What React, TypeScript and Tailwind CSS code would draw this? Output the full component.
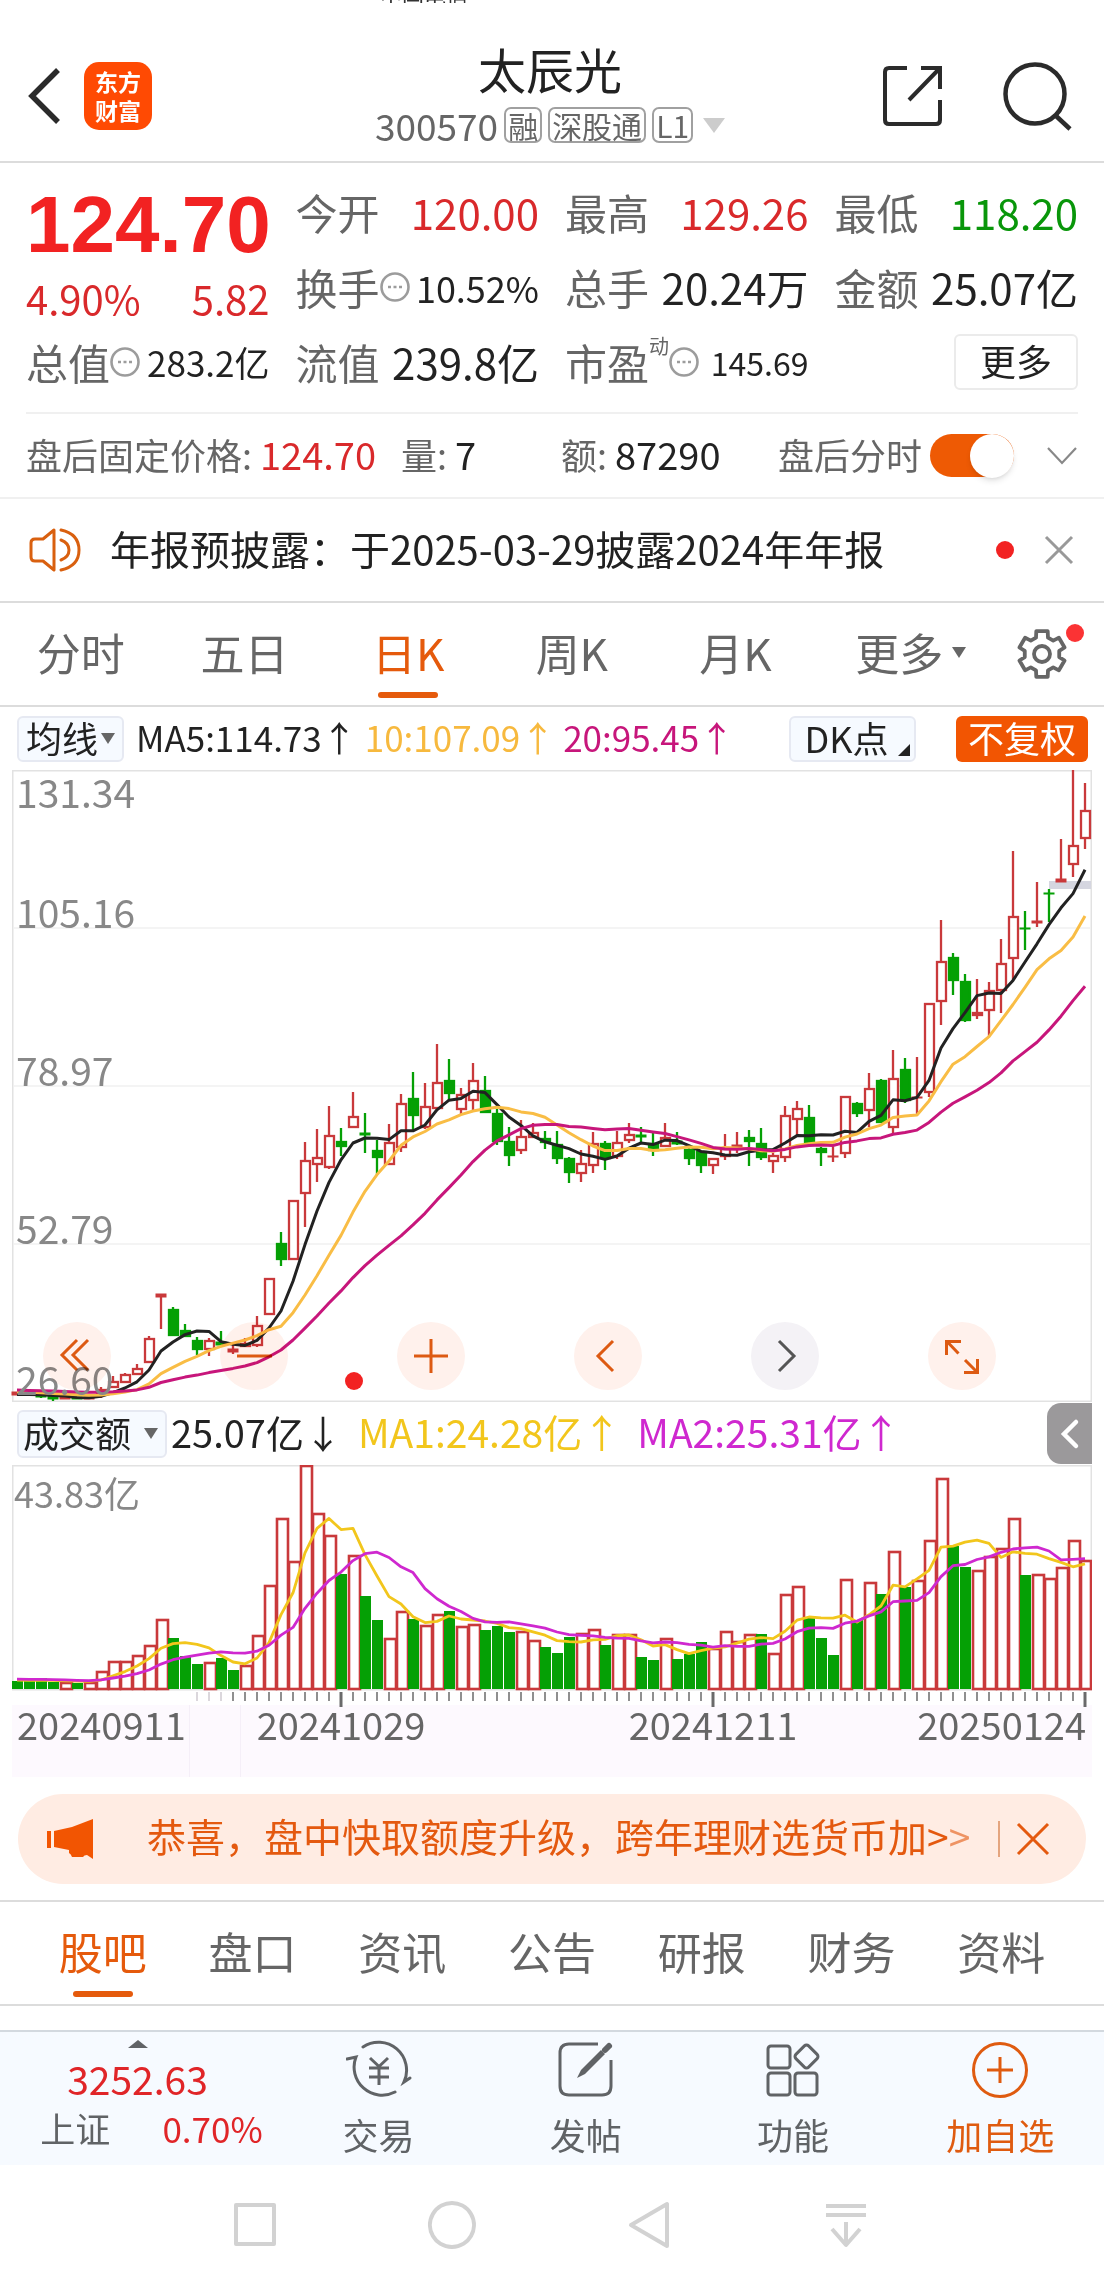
import { useState } from "react";

type Candle = [high: number, top: number, bottom: number, low: number, up: 0 | 1];

// [high, body top, body bottom, low, up] measured from the top of the chart
const candles: Candle[] = [
  [622, 622, 625, 625, 1], [622, 622, 625, 625, 0], [625, 625, 627, 628, 0], [626, 626, 629, 631, 0],
  [627, 627, 629, 629, 1], [627, 627, 629, 629, 0], [627, 627, 629, 629, 1], [617, 619, 625, 628, 1],
  [606, 611, 618, 618, 1], [603, 604, 613, 613, 1], [594, 598, 605, 605, 1], [566, 568, 593, 593, 1],
  [524, 524, 527, 559, 1], [537, 539, 566, 566, 0], [554, 560, 567, 567, 0], [567, 570, 580, 585, 0],
  [568, 570, 580, 586, 1], [561, 572, 575, 575, 0], [573, 579, 582, 584, 1], [568, 573, 577, 577, 1],
  [546, 555, 576, 577, 1], [508, 508, 545, 545, 1], [462, 473, 490, 496, 0], [430, 430, 490, 490, 1],
  [372, 390, 424, 457, 1], [359, 387, 395, 412, 1], [336, 365, 398, 399, 1], [358, 371, 377, 386, 0],
  [322, 346, 358, 358, 1], [343, 363, 365, 383, 0], [370, 380, 388, 405, 0], [354, 372, 395, 395, 1],
  [324, 333, 378, 382, 1], [302, 328, 346, 360, 0], [313, 336, 358, 359, 1], [274, 312, 339, 339, 1],
  [289, 310, 324, 330, 0], [318, 324, 340, 344, 1], [293, 310, 331, 340, 1], [306, 320, 343, 343, 0],
  [337, 343, 372, 375, 0], [357, 371, 386, 396, 0], [350, 366, 381, 384, 1], [353, 362, 368, 368, 1],
  [361, 368, 373, 379, 0], [361, 374, 389, 394, 0], [387, 388, 403, 413, 0], [380, 393, 404, 412, 1],
  [362, 373, 396, 403, 1], [371, 373, 389, 400, 0], [361, 372, 387, 389, 1], [353, 364, 371, 373, 1],
  [357, 365, 367, 373, 0], [363, 373, 381, 386, 0], [353, 367, 377, 377, 1], [362, 371, 374, 375, 0],
  [377, 379, 389, 395, 0], [381, 381, 396, 403, 0], [388, 388, 396, 404, 1], [364, 378, 387, 390, 1],
  [362, 375, 378, 383, 1], [360, 367, 372, 396, 0], [358, 373, 388, 390, 0], [383, 385, 392, 403, 1],
  [336, 345, 388, 392, 1], [331, 338, 350, 366, 1], [335, 347, 373, 373, 0], [377, 378, 383, 396, 0],
  [377, 386, 387, 392, 1], [326, 326, 384, 388, 1], [332, 333, 344, 347, 0], [303, 318, 341, 357, 1],
  [309, 310, 353, 353, 0], [280, 308, 358, 363, 1], [288, 299, 331, 333, 0], [287, 327, 328, 344, 1],
  [233, 233, 323, 327, 1], [150, 191, 232, 255, 1], [183, 187, 211, 225, 0], [204, 211, 251, 252, 0],
  [209, 242, 246, 249, 1], [212, 220, 241, 267, 1], [169, 193, 221, 243, 1], [81, 146, 189, 210, 1],
  [141, 158, 159, 180, 0], [112, 151, 153, 157, 1], [119, 123, 124, 152, 0], [69, 109, 112, 112, 1],
  [0, 75, 95, 107, 1], [13, 40, 69, 79, 1],
];

const volumes = [
  8, 8, 11, 7, 7, 6, 7, 18, 28, 28, 34, 44, 70, 51, 33, 25, 27, 31, 19, 24, 54, 104, 171, 128, 224, 176,
  154, 115, 134, 93, 69, 51, 78, 70, 64, 75, 78, 63, 65, 59, 63, 57, 58, 49, 42, 36, 52, 56, 60, 44, 55,
  55, 32, 29, 51, 30, 35, 47, 41, 58, 48, 55, 55, 36, 95, 103, 71, 51, 34, 110, 69, 107, 95, 138, 102,
  109, 149, 211, 143, 122, 119, 133, 141, 171, 114, 115, 111, 122, 149, 129,
];

const volumeUp = [4, 6, 7, 8, 9, 10, 11, 12, 16, 19, 20, 21, 22, 23, 24, 25, 26, 28, 31, 32, 34, 35, 37, 38,
  42, 43, 47, 48, 50, 51, 54, 58, 59, 60, 61, 63, 64, 65, 69, 71, 73, 75, 76, 77, 80, 81, 82, 83, 85, 86,
  87, 88, 89];

const RED = "#c9393b";
const GREEN = "#05a005";

const xOf = (i: number) => 5 + 12 * i;

// Moving average as svg points, days before the first one count as `seed`
function average(values: number[], days: number, seed: number, toY = (v: number) => v) {
  return values
    .map((_, i) => {
      let sum = 0;
      for (let d = 0; d < days; d++) sum += i - d >= 0 ? values[i - d] : seed;
      return `${xOf(i)},${toY(sum / days).toFixed(1)}`;
    })
    .join(" ");
}

function PriceChart() {
  const closes = candles.map((c) => (c[4] ? c[1] : c[2]));
  const labels: [string, number][] = [
    ["131.34", 38],
    ["105.16", 158],
    ["78.97", 316],
    ["52.79", 474],
    ["26.60", 625],
  ];

  return (
    <svg viewBox="0 0 1080 632" className="block w-full overflow-visible" role="img" aria-label="日K">
      <rect x="0.75" y="0.75" width="1078.5" height="630.5" fill="#fff" stroke="#e2e2e2" strokeWidth="1.5" />
      {[158, 316, 474].map((y) => (
        <line key={y} x1="1" x2="1079" y1={y} y2={y} stroke="#f0f0f0" strokeWidth="1.5" />
      ))}
      <rect x="1037" y="111" width="42" height="8" fill="#d5d6e0" />
      {candles.map(([high, top, bottom, low, up], i) => {
        const x = xOf(i);
        const flat = bottom - top < 4;
        return (
          <g key={i} stroke={up ? RED : GREEN} strokeWidth="2.3" fill={up ? "#fff" : GREEN}>
            <line x1={x} x2={x} y1={high} y2={top} />
            <line x1={x} x2={x} y1={bottom} y2={low} />
            {flat ? (
              <rect x={x - 5} y={top} width="10" height={bottom - top} strokeWidth="1" fill={up ? RED : GREEN} />
            ) : (
              <rect x={x - 4} y={top + 1} width="9" height={bottom - top - 2} />
            )}
          </g>
        );
      })}
      <g fill="none" strokeWidth="3" strokeLinejoin="round">
        <polyline points={average(closes, 5, 625)} stroke="#222" />
        <polyline points={average(closes, 10, 622)} stroke="#f9bd45" />
        <polyline points={average(closes, 20, 620)} stroke="#c7167b" />
      </g>
      <g fill="#888" fontSize="39">
        {labels.map(([text, y]) => (
          <text key={text} x="4" y={y}>
            {text}
          </text>
        ))}
      </g>
      <circle cx="342" cy="611" r="9" fill="#f22222" />
    </svg>
  );
}

function VolumeChart() {
  const toY = (v: number) => 224 - v;
  const dates: [string, number, "start" | "middle" | "end"][] = [
    ["20240911", 5, "start"],
    ["20241029", 329, "middle"],
    ["20241211", 701, "middle"],
    ["20250124", 1074, "end"],
  ];

  return (
    <svg viewBox="0 0 1080 312" className="block w-full" role="img" aria-label="成交额">
      <rect x="0" y="240" width="1080" height="72" fill="#fdf9fe" />
      <path d="M177.500 240V312M228.500 240V312" stroke="#f5eff8" />
      <rect x="0.75" y="0.75" width="1078.5" height="224" fill="#fff" stroke="#e2e2e2" strokeWidth="1.5" />
      <text x="2" y="43" fill="#888" fontSize="36">
        43.83亿
      </text>
      {volumes.map((v, i) =>
        volumeUp.includes(i) ? (
          <rect key={i} x={12 * i + 1} y={225 - v} width={i === 89 ? 10 : 11} height={v - 1} fill="#fff" stroke={RED} strokeWidth="2.6" />
        ) : (
          <rect key={i} x={12 * i} y={224 - v} width="11" height={v} fill={GREEN} />
        )
      )}
      <g fill="none" strokeWidth="2.8" strokeLinejoin="round">
        <polyline points={average(volumes, 5, 9, toY)} stroke="#f2c61c" />
        <polyline points={average(volumes, 10, 10, toY)} stroke="#cf28cf" />
      </g>
      {volumes.map((_, i) => {
        const major = i === 27 || i === 58 || i === 89;
        if (i < 15) return null;
        return (
          <line
            key={i}
            x1={xOf(i)}
            x2={xOf(i)}
            y1="227"
            y2={major ? 242 : 236}
            stroke={i < 18 ? "#cfcad0" : "#6a6a6a"}
            strokeWidth={major ? 3 : 1.5}
          />
        );
      })}
      <g fill="#666" fontSize="38">
        {dates.map(([text, x, anchor]) => (
          <text key={text} x={x} y="275" textAnchor={anchor}>
            {text}
          </text>
        ))}
      </g>
    </svg>
  );
}

function InfoDots() {
  return (
    <svg viewBox="0 0 30 30" className="size-[30px] shrink-0" fill="none" stroke="#9c9c9c" strokeWidth="2.6">
      <circle cx="15" cy="15" r="13.5" />
      <path d="M8 15h3M13.500 15h3M19 15h3" />
    </svg>
  );
}

function Triangle({ className }: { className: string }) {
  return (
    <svg viewBox="0 0 14 11" preserveAspectRatio="none" className={className} fill="currentColor">
      <path d="M0 0h14L7 11z" />
    </svg>
  );
}

function Gear() {
  const points: string[] = [];
  for (let k = 0; k < 6; k++) {
    const tooth: [number, number][] = [[17.5, -20], [23.5, -14], [23.5, 14], [17.5, 20]];
    for (const [r, offset] of tooth) {
      const a = ((60 * k - 90 + offset) * Math.PI) / 180;
      points.push(`${(26 + r * Math.cos(a)).toFixed(2)},${(26 + r * Math.sin(a)).toFixed(2)}`);
    }
  }
  return (
    <svg viewBox="0 0 52 52" className="size-[52px]" fill="none" stroke="#666" strokeWidth="3.8">
      <polygon points={points.join(" ")} strokeLinejoin="round" />
      <circle cx="26" cy="26" r="8" />
    </svg>
  );
}

const tags = ["融", "深股通", "L1"];
const periods = ["分时", "五日", "日K", "周K", "月K", "更多"];
const sections = ["股吧", "盘口", "资讯", "公告", "研报", "财务", "资料"];

const tools = [
  { label: "快退", path: "M34 18L19 33L34 48M45 18L30 33L45 48" },
  { label: "缩小", path: "M17 34H52" },
  { label: "放大", path: "M17 34H51M34 17V51" },
  { label: "前移", path: "M39 19L24 34L39 49" },
  { label: "后移", path: "M28 19L43 34L28 49" },
  { label: "全屏", path: "M30.500 31.500L19 19.500M18.500 33V19.500H33M37 38L49 50M49.500 37V50.500H36" },
];

const cell = "flex items-center justify-between h-[75px] pb-1";
const label = "text-[42px] text-[#666]";

export default function App() {
  const [period, setPeriod] = useState("日K");
  const [section, setSection] = useState("股吧");

  return (
    <div className="w-full bg-white text-[#222] leading-none font-['Noto_Sans_CJK_SC',sans-serif] overflow-hidden">
      {/* Header */}
      <div className="h-[3px] overflow-hidden flex flex-col justify-end items-start pl-[380px] text-[22px] leading-[18px] text-[#333]">
        <span>中国电信</span>
      </div>
      <header className="grid grid-cols-[1fr_auto_1fr] items-center h-[160px] pt-6 pl-7 pr-8 border-b-2 border-[#dcdcdc]">
        <div className="flex items-center gap-5 pt-1">
          <button aria-label="返回">
            <svg viewBox="0 0 36 58" className="w-9 h-[58px]" fill="none" stroke="#2b2b2b" strokeWidth="5.500">
              <path d="M30 3L4 29L30 55" />
            </svg>
          </button>
          <div className="size-[68px] rounded-[15px] bg-[#ff4a03] text-white text-[23px] leading-[29px] font-bold flex flex-col items-center justify-center">
            <span>东方</span>
            <span>财富</span>
          </div>
        </div>
        <div className="flex flex-col items-center gap-3 pb-1">
          <h1 className="text-[48px] leading-[54px]">太辰光</h1>
          <div className="flex items-center gap-[6px] text-[#666]">
            <span className="text-[37px]">300570</span>
            {tags.map((t) => (
              <span key={t} className="h-9 px-[2px] flex items-center text-[30px] border-2 border-[#a0a0a0] rounded-[7px]">
                {t}
              </span>
            ))}
            <Triangle className="ml-1 w-[22px] h-[15px] text-[#ccc]" />
          </div>
        </div>
        <div className="flex items-center justify-end gap-[58px] pt-1">
          <button aria-label="分享">
            <svg viewBox="0 0 62 62" className="size-[62px]" fill="none" stroke="#2b2b2b" strokeWidth="4">
              <path d="M25 3H7Q3 3 3 7V55Q3 59 7 59H54Q58 59 58 55V35M39 3H58V24M58 3L27 35" />
            </svg>
          </button>
          <button aria-label="搜索">
            <svg viewBox="0 0 70 70" className="size-[70px]" fill="none" stroke="#2b2b2b" strokeWidth="4.500">
              <circle cx="33" cy="33" r="29.500" />
              <path d="M53 54L68 68" />
            </svg>
          </button>
        </div>
      </header>

      {/* Quote */}
      <section className="px-[26px]">
        <div className="grid grid-cols-4 gap-x-[26px] pt-[13px] pb-[11px] border-b-2 border-[#f0f0f0] text-[42px]">
          <div className="row-span-2 flex flex-col justify-end gap-5 pb-2 text-[#f22222]">
            <div className="text-[80px] leading-[66px] font-bold font-['Liberation_Sans',sans-serif]">124.70</div>
            <div className="flex justify-between text-[40px] leading-[40px] text-[#d9292b]">
              <span>4.90%</span>
              <span>5.82</span>
            </div>
          </div>
          <div className={cell}>
            <span className={label}>今开</span>
            <span className="text-[#d9292b]">120.00</span>
          </div>
          <div className={cell}>
            <span className={label}>最高</span>
            <span className="text-[#d9292b]">129.26</span>
          </div>
          <div className={cell}>
            <span className={label}>最低</span>
            <span className="text-[#09960a]">118.20</span>
          </div>
          <div className={cell}>
            <span className="flex items-center">
              <span className={label}>换手</span>
              <InfoDots />
            </span>
            <span className="text-[36px]">10.52%</span>
          </div>
          <div className={cell}>
            <span className={label}>总手</span>
            <span>20.24万</span>
          </div>
          <div className={cell}>
            <span className={label}>金额</span>
            <span>25.07亿</span>
          </div>
          <div className={cell}>
            <span className="flex items-center">
              <span className={label}>总值</span>
              <InfoDots />
            </span>
            <span className="text-[35px]">283.2亿</span>
          </div>
          <div className={cell}>
            <span className={label}>流值</span>
            <span>239.8亿</span>
          </div>
          <div className={cell}>
            <span className="flex items-center">
              <span className={label}>市盈</span>
              <span className="pb-8 text-xl leading-[20px] text-[#666]">动</span>
              <InfoDots />
            </span>
            <span className="text-[32px]">145.69</span>
          </div>
          <div className="flex items-center justify-end h-[75px] pb-1">
            <button className="h-[56px] w-[124px] pb-1 border-2 border-[#ebebeb] rounded-[6px] text-[36px]">更多</button>
          </div>
        </div>

        <div className="flex items-center h-[83px] text-[36px] text-[#666]">
          <span className="w-[375px] pb-1 flex items-center gap-2">
            盘后固定价格:<span className="text-[38px] text-[#d9292b]">124.70</span>
          </span>
          <span className="w-[160px] pb-1 flex items-center gap-2">
            量:<span className="text-[38px] text-[#222]">7</span>
          </span>
          <span className="flex-1 pb-1 flex items-center gap-2">
            额:<span className="text-[38px] text-[#222]">87290</span>
          </span>
          <label htmlFor="afterHours" className="mr-2 pb-1">
            盘后分时
          </label>
          <input
            type="checkbox"
            id="afterHours"
            defaultChecked
            className="appearance-none w-[84px] h-[43px] rounded-full bg-[#ccc] checked:bg-[#ee5a04] flex items-center checked:justify-end before:content-[''] before:size-[44px] before:rounded-full before:bg-white before:shadow-md"
          />
          <button aria-label="展开" className="ml-8">
            <svg viewBox="0 0 32 20" className="w-8 h-5" fill="none" stroke="#888" strokeWidth="2.200">
              <path d="M2 2L16 17L30 2" />
            </svg>
          </button>
        </div>
      </section>

      {/* Notice */}
      <section className="flex items-center h-[106px] pl-7 pr-[30px] border-t-2 border-b-2 border-t-[#f0f0f0] border-b-[#dcdcdc]">
        <svg viewBox="0 0 54 46" className="w-[54px] h-[46px]" fill="none" stroke="#d9600f" strokeWidth="3" strokeLinejoin="round">
          <path d="M26 3L15 12H7Q3 12 3 16V30Q3 34 7 34H15L26 43Z" />
          <path d="M33 13Q41 16 41 23T33 33M33 3Q51 7 51 23T33 43" strokeLinecap="round" />
        </svg>
        <p className="flex-1 ml-7 pb-1 text-[40px] whitespace-nowrap">年报预披露：于2025-03-29披露2024年年报</p>
        <span className="size-[18px] rounded-full bg-[#f22222]" />
        <button aria-label="关闭" className="ml-[30px]">
          <svg viewBox="0 0 30 30" className="size-[30px]" fill="none" stroke="#999" strokeWidth="3">
            <path d="M2 2L28 28M28 2L2 28" />
          </svg>
        </button>
      </section>

      {/* Periods */}
      <nav className="flex h-[104px] border-b-2 border-[#dcdcdc]">
        {periods.map((p) => (
          <button
            key={p}
            onClick={() => setPeriod(p)}
            className={`relative flex-1 pb-1 pr-[2px] flex items-center justify-center text-[44px] ${period === p ? "text-[#e55a0c]" : "text-[#666]"}`}
          >
            {p}
            {p === "更多" && <Triangle className="absolute left-[134px] w-[14px] h-[11px]" />}
            {period === p && <span className="absolute bottom-[7px] w-[60px] h-[6px] rounded-full bg-[#e55a0c]" />}
          </button>
        ))}
        <button aria-label="设置" className="relative w-[122px] pl-[34px] flex items-center">
          <Gear />
          <span className="absolute right-5 top-[21px] size-[18px] rounded-full bg-[#fb3334]" />
        </button>
      </nav>

      {/* Averages */}
      <section className="flex items-center h-[63px] pl-[17px] pr-4 text-[35px] whitespace-nowrap">
        <div className="relative flex items-center">
          <select
            aria-label="均线"
            className="appearance-none w-[107px] h-[46px] pl-[7px] pb-1 rounded-[6px] border-2 border-[#e6e9f2] bg-[#f6faff] text-[36px] leading-[38px]"
          >
            <option>均线</option>
          </select>
          <Triangle className="absolute right-[9px] w-[14px] h-[11px] text-[#666] pointer-events-none" />
        </div>
        <span className="ml-3 pb-1">MA5:114.73↑</span>
        <span className="ml-2 pb-1 text-[#f7b93e]">10:107.09↑</span>
        <span className="ml-2 pb-1 text-[#c7167b]">20:95.45↑</span>
        <button className="relative ml-auto w-[127px] h-[46px] pr-3 pb-1 rounded-[6px] border-2 border-[#e6e9f2] bg-[#f6faff] text-[36px] leading-[38px]">
          DK点
          <svg viewBox="0 0 12 12" className="absolute right-1 bottom-1 size-3">
            <path d="M12 0V12H0z" fill="#222" />
          </svg>
        </button>
        <button className="ml-10 w-[132px] h-[46px] pb-1 rounded-[6px] bg-[#f25502] text-white text-[36px] leading-[42px]">不复权</button>
      </section>

      {/* Candles */}
      <section className="relative px-3">
        <PriceChart />
        <div className="absolute left-[43px] right-[108px] bottom-3 flex justify-between mix-blend-multiply">
          {tools.map((t) => (
            <button
              key={t.label}
              aria-label={t.label}
              className={`size-[68px] rounded-full ${t.label === "后移" ? "bg-[#f4f2f6] text-[#555]" : "bg-[#fff1ec] text-[#dd5a12]"}`}
            >
              <svg viewBox="0 0 68 68" fill="none" stroke="currentColor" strokeWidth="3">
                <path d={t.path} />
              </svg>
            </button>
          ))}
        </div>
      </section>

      {/* Volume */}
      <section className="px-3">
        <div className="flex items-center h-[63px] pl-[5px] text-[39px] whitespace-nowrap">
          <div className="relative flex items-center">
            <select
              aria-label="成交额"
              className="appearance-none w-[150px] h-[48px] pl-1 pb-1 rounded-[6px] border-2 border-[#e6e9f2] bg-[#f6faff] text-[36px] leading-[40px]"
            >
              <option>成交额</option>
            </select>
            <Triangle className="absolute right-[9px] w-[14px] h-[11px] text-[#666] pointer-events-none" />
          </div>
          <span className="ml-1 pb-1 text-[38px]">25.07亿↓</span>
          <span className="ml-4 pb-1 text-[#f2c61c]">MA1:24.28亿↑</span>
          <span className="ml-4 pb-1 text-[#cf28cf]">MA2:25.31亿↑</span>
          <button aria-label="收起" className="ml-auto w-[45px] h-[61px] flex items-center justify-center rounded-l-[14px] bg-[#9b999b]">
            <svg viewBox="0 0 20 32" className="w-5 h-8" fill="none" stroke="#fff" strokeWidth="4.500" strokeLinecap="round">
              <path d="M16 4L4 16L16 28" />
            </svg>
          </button>
        </div>
        <VolumeChart />
      </section>

      {/* Banner */}
      <section className="mx-[18px] mt-[17px] mb-4 h-[90px] rounded-full bg-[#ffece3] flex items-center pl-7 pr-9 text-[#e4590f]">
        <svg viewBox="0 0 48 40" className="w-12 h-10" fill="#f25502">
          <path d="M1 12h4v17H1zM8 12L26 8L47 0V40L41 36Q38 36 37 38H26Q25 35 23 34V31L8 28z" />
        </svg>
        <a href="#" className="ml-[53px] pb-2 flex-1 text-[39px] whitespace-nowrap">
          恭喜，盘中快取额度升级，跨年理财选货币加&gt;<span className="opacity-60">&gt;</span>
        </a>
        <span className="w-[2px] h-9 bg-[#e4a57f]" />
        <button aria-label="关闭" className="ml-4">
          <svg viewBox="0 0 34 34" className="size-[34px]" fill="none" stroke="#e4590f" strokeWidth="3">
            <path d="M2 2L32 32M32 2L2 32" />
          </svg>
        </button>
      </section>

      {/* Sections */}
      <nav className="flex h-[106px] px-7 border-t-2 border-b-2 border-[#dcdcdc]">
        {sections.map((s) => (
          <button
            key={s}
            onClick={() => setSection(s)}
            className={`relative flex-1 pb-1 flex items-center justify-center text-[44px] ${section === s ? "text-[#e55a0c]" : "text-[#666]"}`}
          >
            {s}
            {section === s && <span className="absolute bottom-[7px] w-[60px] h-[6px] rounded-full bg-[#e55a0c]" />}
          </button>
        ))}
      </nav>

      {/* Bottom bar */}
      <footer className="mt-6 flex h-[135px] border-t-2 border-[#d3d9df] bg-[#f6faff] text-[36px] text-[#606366]">
        <button className="w-[275px] flex flex-col items-center pt-2">
          <Triangle className="w-[20px] h-[8px] rotate-180" />
          <span className="mt-[10px] text-[39px] leading-[40px] text-[#e02528]">3252.63</span>
          <span className="mt-2 flex gap-[52px] pl-7 leading-[44px]">
            <span className="text-[35px]">上证</span>
            <span className="text-[35px] text-[#e02528]">0.70%</span>
          </span>
        </button>
        <button className="flex-1 flex flex-col items-center pt-[6px] gap-[14px]">
          <svg viewBox="0 0 66 64" className="w-[66px] h-16" fill="none" stroke="currentColor" strokeWidth="3" strokeLinecap="round">
            <path d="M17 9A28 28 0 0 1 58 44L64 40M49 54A28 28 0 0 1 10 19L1 21" />
            <path d="M24 20L33 28.500L42 20M23 30H43M23 39H43M33 29V47" strokeLinecap="butt" />
          </svg>
          交易
        </button>
        <button className="flex-1 flex flex-col items-center pt-[6px] gap-[14px]">
          <svg viewBox="0 0 60 64" className="w-[60px] h-16" fill="none" stroke="currentColor" strokeWidth="3">
            <path d="M42 6H13Q4 6 4 15V48Q4 57 13 57H46Q55 57 55 48V22" />
            <path d="M21 40L25 32L45 12L49 16L29 36Z" fill="currentColor" stroke="none" />
            <path d="M49 12L53 8" strokeWidth="6" strokeLinecap="round" />
          </svg>
          发帖
        </button>
        <button className="flex-1 flex flex-col items-center pt-[6px] gap-[14px]">
          <svg viewBox="0 0 60 64" className="w-[60px] h-16" fill="none" stroke="currentColor" strokeWidth="3">
            <rect x="5" y="8" width="22" height="22" rx="3" />
            <rect x="5" y="35" width="22" height="22" rx="3" />
            <rect x="32" y="35" width="22" height="22" rx="3" />
            <rect x="34.500" y="9.500" width="18" height="18" rx="3" transform="rotate(45 43.500 18.500)" />
          </svg>
          功能
        </button>
        <button className="flex-1 flex flex-col items-center pt-[6px] gap-[14px] text-[#df5b10]">
          <svg viewBox="0 0 60 64" className="w-[60px] h-16" fill="none" stroke="currentColor" strokeWidth="3">
            <circle cx="30" cy="32" r="26.500" />
            <path d="M17 32H43M30 19V45" />
          </svg>
          加自选
        </button>
      </footer>

      {/* System keys */}
      <div className="flex items-center justify-between h-[119px] pl-[227px] pr-[230px]">
        {[
          "M9 8H47V47H9z",
          "M28 6A22 22 0 1 1 27.900 6z",
          "M46 7V49L10 28z",
          "M8 9H48M8 18H48M28 25V48M14 32L28 48L42 32",
        ].map((d) => (
          <svg key={d} viewBox="0 0 56 56" className="size-[56px]" fill="none" stroke="#d2d2d2" strokeWidth="4" strokeLinejoin="round">
            <path d={d} />
          </svg>
        ))}
      </div>
    </div>
  );
}
